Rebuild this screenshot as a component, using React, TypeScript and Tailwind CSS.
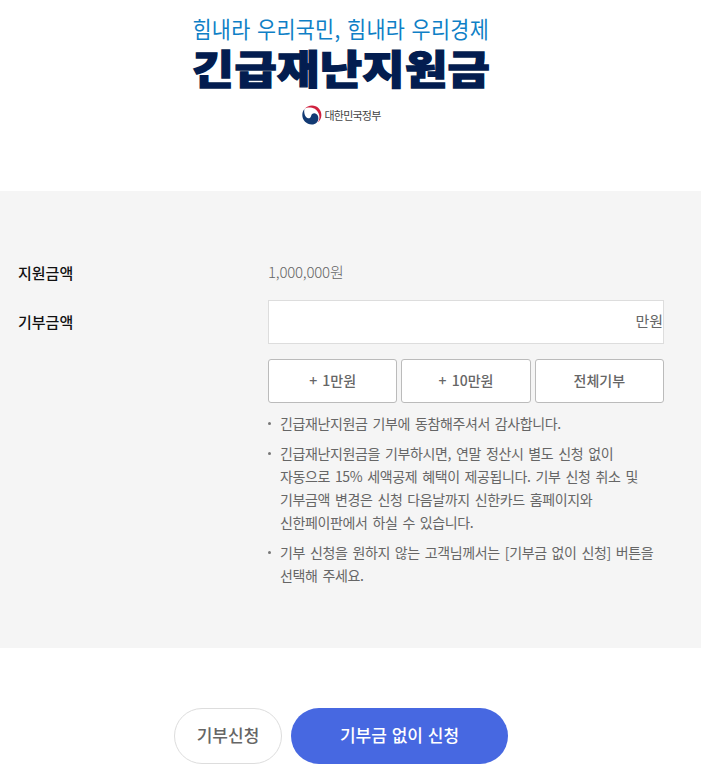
const amountButtons = ["+ 1만원", "+ 10만원", "전체기부"];

const notices = [
    ["긴급재난지원금 기부에 동참해주셔서 감사합니다."],
    [
        "긴급재난지원금을 기부하시면, 연말 정산시 별도 신청 없이",
        "자동으로 15% 세액공제 혜택이 제공됩니다. 기부 신청 취소 및",
        "기부금액 변경은 신청 다음날까지 신한카드 홈페이지와",
        "신한페이판에서 하실 수 있습니다.",
    ],
    [
        "기부 신청을 원하지 않는 고객님께서는 [기부금 없이 신청] 버튼을",
        "선택해 주세요.",
    ],
];

function GovernmentMark() {
    return (
        <svg className="h-5 w-5 shrink-0" viewBox="0 0 20 20" fill="none">
            {/* Red crescent */}
            <path d="M2.500 4C4.300 1.700 7 .5 10 .5c5.200 0 9.400 4.200 9.400 9.400 0 3-1.400 5.800-3.700 7.500 1.700-2.300 2.200-5.100 1.400-7.700C16 5.800 12.700 2.900 8.500 2.600 6.200 2.400 4.100 2.900 2.500 4Z" fill="#d0213f" />
            {/* Blue swirl */}
            <path d="M2.500 4C1 5.700.3 7.800.3 10c0 5.200 4.200 9.500 9.500 9.500 3.900 0 6.600-2.900 6.600-6.300 0-2.800-1.700-4.800-4-4.900-1.900 0-2.900 1.200-3.300 2.600-.5 1.700-1.700 2.700-3.100 2.300C3.200 12.400 1.500 7.600 2.500 4Z" fill="#123a73" />
        </svg>
    );
}

function Header() {
    return (
        <header className="flex h-[191px] flex-col items-center pr-[19px] pt-[14px]">
            <p className="h-[28px] scale-x-[0.9] whitespace-nowrap text-[23px] font-normal leading-[28px] tracking-[0.35px] text-[#0f7fc6] [word-spacing:1.7px]">
                힘내라 우리국민, 힘내라 우리경제
            </p>
            <h1 className="mt-[5px] h-[40px] scale-y-[0.87] whitespace-nowrap text-[46px] font-black leading-[40px] tracking-[0.3px] text-[#031d50] [-webkit-text-stroke:1.5px_#031d50]">
                긴급재난지원금
            </h1>
            <div className="mt-[18px] flex items-center gap-[3px]">
                <GovernmentMark />
                <span className="whitespace-nowrap text-[11px] leading-5 tracking-[-0.8px] text-[#444]">대한민국정부</span>
            </div>
        </header>
    );
}

export default function App() {
    return (
        <div className="h-[778px] w-[701px] overflow-hidden bg-white font-['Noto_Sans_CJK_KR',sans-serif] text-[#666]">
            <Header />

            <main className="h-[457px] bg-[#f5f5f5] pl-[18px] pr-[37px] pt-[70px]">
                <div className="flex h-[39px]">
                    <div className="w-[250px] text-[15px] font-medium leading-[24px] text-[#111]">지원금액</div>
                    <div className="text-[15px] font-light leading-[22px] tracking-[-0.2px]">1,000,000원</div>
                </div>

                <div className="flex">
                    <label htmlFor="donation" className="w-[250px] shrink-0 text-[15px] font-medium leading-[44px] text-[#111]">
                        기부금액
                    </label>
                    <div className="w-[396px]">
                        <div className="flex h-11 items-center border border-[#ddd] bg-white">
                            <input id="donation" className="min-w-0 flex-1 outline-none" />
                            <span className="pb-[2px] text-[15px]">만원</span>
                        </div>

                        <div className="mt-[15px] grid grid-cols-3 gap-1">
                            {amountButtons.map((label) => (
                                <button
                                    key={label}
                                    className="h-11 rounded-[3px] border border-[#bbb] bg-white pb-[2px] text-[14px] font-medium [word-spacing:2px]"
                                >
                                    {label}
                                </button>
                            ))}
                        </div>

                        <ul className="mt-[9px] flex flex-col gap-[7px] text-[14px] leading-[23px] tracking-[-0.38px] [word-spacing:2.2px]">
                            {notices.map((lines) => (
                                <li key={lines[0]} className="flex">
                                    <span className="mt-[10px] mr-[9px] h-[3px] w-[3px] shrink-0 rounded-full bg-[#777]" />
                                    <div>
                                        {lines.map((line) => (
                                            <p key={line} className="whitespace-nowrap">{line}</p>
                                        ))}
                                    </div>
                                </li>
                            ))}
                        </ul>
                    </div>
                </div>
            </main>

            <footer className="flex gap-[9px] pl-[174px] pt-[60px]">
                <button className="h-14 w-[108px] rounded-full border border-[#ddd] bg-white pb-[3px] text-[17px] font-medium">
                    기부신청
                </button>
                <button className="h-14 w-[217px] rounded-full bg-[#4768e1] pb-[3px] text-[17px] font-medium text-white [word-spacing:1px]">
                    기부금 없이 신청
                </button>
            </footer>
        </div>
    );
}
